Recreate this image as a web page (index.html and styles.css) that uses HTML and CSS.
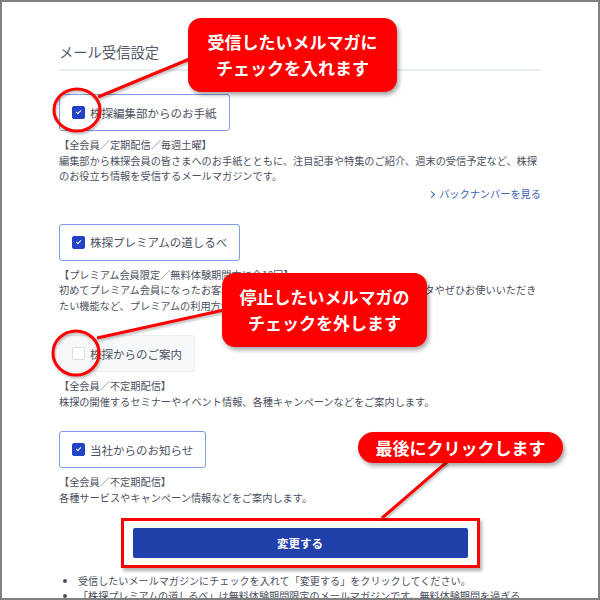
FILE: index.html
```html
<!DOCTYPE html>
<html lang="ja">
<head>
    <meta charset="UTF-8">
    <meta name="viewport" content="width=device-width, initial-scale=1.0">
    <title>メール受信設定</title>
    <link rel="stylesheet" href="styles.css">
</head>
<body>
    <div class="frame">
        <div class="settings">
            <div class="heading">メール受信設定</div>

            <div class="item">
                <label class="choice checked"><span class="box"></span>株探編集部からのお手紙</label>
                <p class="desc">【全会員／定期配信／毎週土曜】<br>編集部から株探会員の皆さまへのお手紙とともに、注目記事や特集のご紹介、週末の受信予定など、株探<br>のお役立ち情報を受信するメールマガジンです。</p>
                <div class="more"><a href="#"><span class="chevron"></span>バックナンバーを見る</a></div>
            </div>

            <div class="item">
                <label class="choice checked"><span class="box"></span>株探プレミアムの道しるべ</label>
                <p class="desc">【プレミアム会員限定／無料体験期間中に全10回】<br>初めてプレミアム会員になったお客様に株探プレミアムの便利な機能や注目データやぜひお使いいただき<br>たい機能など、プレミアムの利用方法をご紹介するメールマガジンです。</p>
            </div>

            <div class="item">
                <label class="choice"><span class="box"></span>株探からのご案内</label>
                <p class="desc">【全会員／不定期配信】<br>株探の開催するセミナーやイベント情報、各種キャンペーンなどをご案内します。</p>
            </div>

            <div class="item">
                <label class="choice checked"><span class="box"></span>当社からのお知らせ</label>
                <p class="desc">【全会員／不定期配信】<br>各種サービスやキャンペーン情報などをご案内します。</p>
            </div>

            <div class="submit-row">
                <div class="submit-mark">
                    <button class="submit">変更する</button>
                </div>
            </div>

            <ul class="notes">
                <li>受信したいメールマガジンにチェックを入れて「変更する」をクリックしてください。</li>
                <li>「株探プレミアムの道しるべ」は無料体験期間限定のメールマガジンです。無料体験期間を過ぎる</li>
            </ul>
        </div>

        <!-- annotations -->
        <svg class="marks" width="600" height="600" viewBox="0 0 600 600">
            <g fill="none" stroke="#ff0000" stroke-width="3">
                <line x1="98" y1="97" x2="192" y2="58"/>
                <line x1="97" y1="338" x2="224" y2="310"/>
                <line x1="447" y1="462" x2="382" y2="518"/>
                <ellipse cx="77" cy="110" rx="23" ry="21"/>
                <ellipse cx="76" cy="353" rx="23" ry="22"/>
            </g>
        </svg>
        <div class="callout callout-check">受信したいメルマガに<br>チェックを入れます</div>
        <div class="callout callout-uncheck">停止したいメルマガの<br>チェックを外します</div>
        <div class="callout callout-click">最後にクリックします</div>
    </div>
</body>
</html>
```

FILE: styles.css
```css
body {
    margin: 0;
    font-family: "Noto Sans CJK JP", "Noto Sans", sans-serif;
    background: #fff;
}

.frame {
    position: relative;
    width: 600px;
    height: 600px;
    box-sizing: border-box;
    border: 2px solid #808080;
    overflow: hidden;
    background: #fff;
}

.settings {
    padding: 39px 57px 0 57px;
    color: #4b5060;
}

.heading {
    font-size: 14.3px;
    line-height: 22px;
    color: #555a66;
    padding-bottom: 6px;
    border-bottom: 2px solid #e6ebf2;
    margin-bottom: 23px;
}

.item {
    margin-bottom: 22px;
}

.choice {
    display: inline-flex;
    align-items: center;
    gap: 5px;
    height: 35px;
    padding: 0 12px;
    border: 1px solid #7f9ce6;
    border-radius: 3px;
    font-size: 11.5px;
    color: #4b5060;
}

.box {
    width: 11px;
    height: 11px;
    border: 1px solid #d8dce3;
    border-radius: 2px;
    background: #fff;
    position: relative;
}

.choice.checked .box {
    background: #2343c4;
    border-color: #2343c4;
}

.choice.checked .box::after {
    content: "";
    position: absolute;
    left: 3px;
    top: 3px;
    width: 4px;
    height: 2px;
    border-left: 1.5px solid #fff;
    border-bottom: 1.5px solid #fff;
    transform: rotate(-45deg);
}

.choice:not(.checked) {
    background: #f7f8fa;
    border-color: #eceef2;
}

.desc {
    margin: 6px 0 0;
    font-size: 10.2px;
    line-height: 15.5px;
    color: #4b5060;
    white-space: nowrap;
}

.more {
    text-align: right;
    font-size: 10.2px;
    line-height: 16px;
    margin-top: 2px;
    margin-bottom: 1px;
}

.more a {
    color: #3a64b8;
    text-decoration: none;
}

.chevron {
    display: inline-block;
    width: 4px;
    height: 4px;
    border-top: 1.5px solid #3a64b8;
    border-right: 1.5px solid #3a64b8;
    transform: rotate(45deg);
    margin-right: 5px;
    vertical-align: 1px;
}

.submit-row {
    display: flex;
    justify-content: center;
    margin-top: -9px;
}

.submit-mark {
    padding: 7px 9px;
    border: 3px solid #ff0000;
    box-shadow: 2px 3px 3px rgba(0, 0, 0, 0.3);
}

.submit {
    display: block;
    width: 335px;
    height: 30px;
    border: none;
    border-radius: 2px;
    background: #2141aa;
    color: #fff;
    font-family: inherit;
    font-size: 11.5px;
    font-weight: bold;
}

.notes {
    margin: 5px 0 0;
    padding-left: 19px;
    font-size: 10.1px;
    line-height: 15px;
    color: #4b5060;
    white-space: nowrap;
}

.marks {
    position: absolute;
    left: -2px;
    top: -2px;
    filter: drop-shadow(1px 2px 1px rgba(0, 0, 0, 0.25));
}

.callout {
    position: absolute;
    background: #ff0000;
    color: #fff;
    font-weight: bold;
    font-size: 17px;
    line-height: 26px;
    text-align: center;
    border-radius: 13px;
    box-shadow: 2px 3px 4px rgba(0, 0, 0, 0.35);
}

.callout-check {
    left: 186px;
    top: 16px;
    width: 209px;
    height: 74px;
    padding-top: 11px;
    box-sizing: border-box;
}

.callout-uncheck {
    left: 220px;
    top: 271px;
    width: 205px;
    height: 74px;
    padding-top: 11px;
    box-sizing: border-box;
}

.callout-click {
    left: 356px;
    top: 430px;
    width: 205px;
    height: 31px;
    line-height: 31px;
    border-radius: 16px;
}
```
